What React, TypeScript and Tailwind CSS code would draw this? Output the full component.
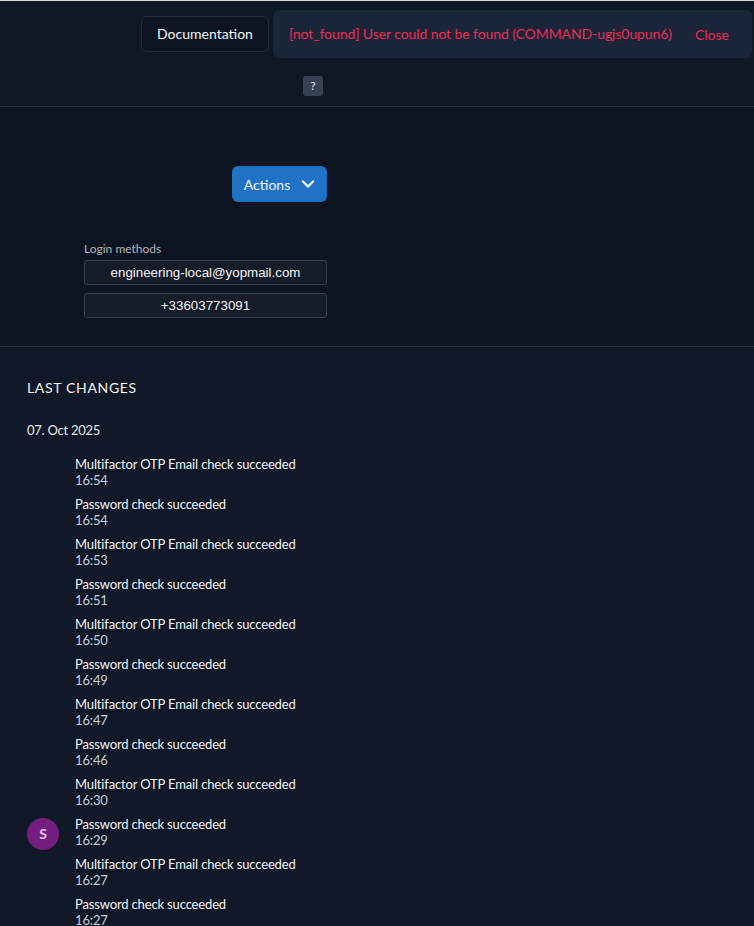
import { ChevronDown } from "lucide-react"

const events = [
  ["Multifactor OTP Email check succeeded", "16:54"],
  ["Password check succeeded", "16:54"],
  ["Multifactor OTP Email check succeeded", "16:53"],
  ["Password check succeeded", "16:51"],
  ["Multifactor OTP Email check succeeded", "16:50"],
  ["Password check succeeded", "16:49"],
  ["Multifactor OTP Email check succeeded", "16:47"],
  ["Password check succeeded", "16:46"],
  ["Multifactor OTP Email check succeeded", "16:30"],
  ["Password check succeeded", "16:29"],
  ["Multifactor OTP Email check succeeded", "16:27"],
  ["Password check succeeded", "16:27"],
]

export default function App() {
  return (
    <div className="relative h-[926px] overflow-hidden bg-[#111928] font-['Lato',sans-serif] text-white">
      {/* Top bar */}
      <div className="h-[107px] border-b border-[#2b303b] border-t border-t-[#d8d8d8] bg-[#101826] pt-[15px]">
        <div className="ml-[141px] flex h-9 w-32 items-center justify-center rounded-md border border-[#262b36] bg-[#0e1522] text-sm text-[#f3f4f6]">
          Documentation
        </div>
        <div className="ml-[303px] mt-6 flex h-5 w-5 items-center justify-center rounded-[3px] bg-[#374151] text-xs text-[#e5e7eb]">
          ?
        </div>
      </div>

      {/* Error toast */}
      <div className="absolute left-[273px] top-[10px] flex h-12 w-[479px] items-center justify-between rounded-md bg-[#1a2539] pl-4 pr-[23px] text-sm text-[#ee2a55]">
        <span className="tracking-[-0.09px]">[not_found] User could not be found (COMMAND-ugjs0upun6)</span>
        <span className="mt-px">Close</span>
      </div>

      {/* User details */}
      <div className="h-[240px] border-b border-[#2b303b] bg-[#0e1522] pl-[84px] pt-[59px]">
        <div className="ml-[148px] flex h-9 w-[95px] items-center justify-center gap-[8px] rounded-md bg-[#1f72c6] pl-[3px] text-sm text-[#f3f4f6]">
          <span className="mt-[2px]">Actions</span>
          <ChevronDown size={20} strokeWidth={2.75} />
        </div>
        <div className="mt-[39px] text-xs leading-4 text-[#b4b4b4]">Login methods</div>
        <div className="mt-[3px] flex w-[243px] flex-col gap-2 font-['Liberation_Sans',sans-serif] text-[13.33px] text-[#f3f4f6]">
          <div className="flex h-[25px] items-center justify-center rounded-[3px] border border-[#3a404c] bg-[#161c28]">
            engineering-local@yopmail.com
          </div>
          <div className="flex h-[25px] items-center justify-center rounded-[3px] border border-[#3a404c] bg-[#161c28]">
            +33603773091
          </div>
        </div>
      </div>

      {/* Last changes */}
      <div className="px-[27px] pt-8">
        <h2 className="text-sm leading-[18px] tracking-[0.67px] text-[#f3f4f6]">LAST CHANGES</h2>
        <div className="mt-[24px] text-[13px] leading-[18px] tracking-[-0.25px] text-[#e5e7eb]">07. Oct 2025</div>
        <div className="relative mt-[17px] flex flex-col gap-2 pl-12">
          {events.map((event, index) => (
            <div key={index} className="text-[13px] leading-4 tracking-[-0.15px]">
              <div className="text-[#f3f4f6]">{event[0]}</div>
              <div className="text-[#c9cdd4]">{event[1]}</div>
            </div>
          ))}
          <div className="absolute left-0 top-[362px] flex h-8 w-8 items-center justify-center rounded-full bg-[#741f7f] text-sm font-bold text-[#e9c5ee]">
            S
          </div>
        </div>
      </div>
    </div>
  )
}
